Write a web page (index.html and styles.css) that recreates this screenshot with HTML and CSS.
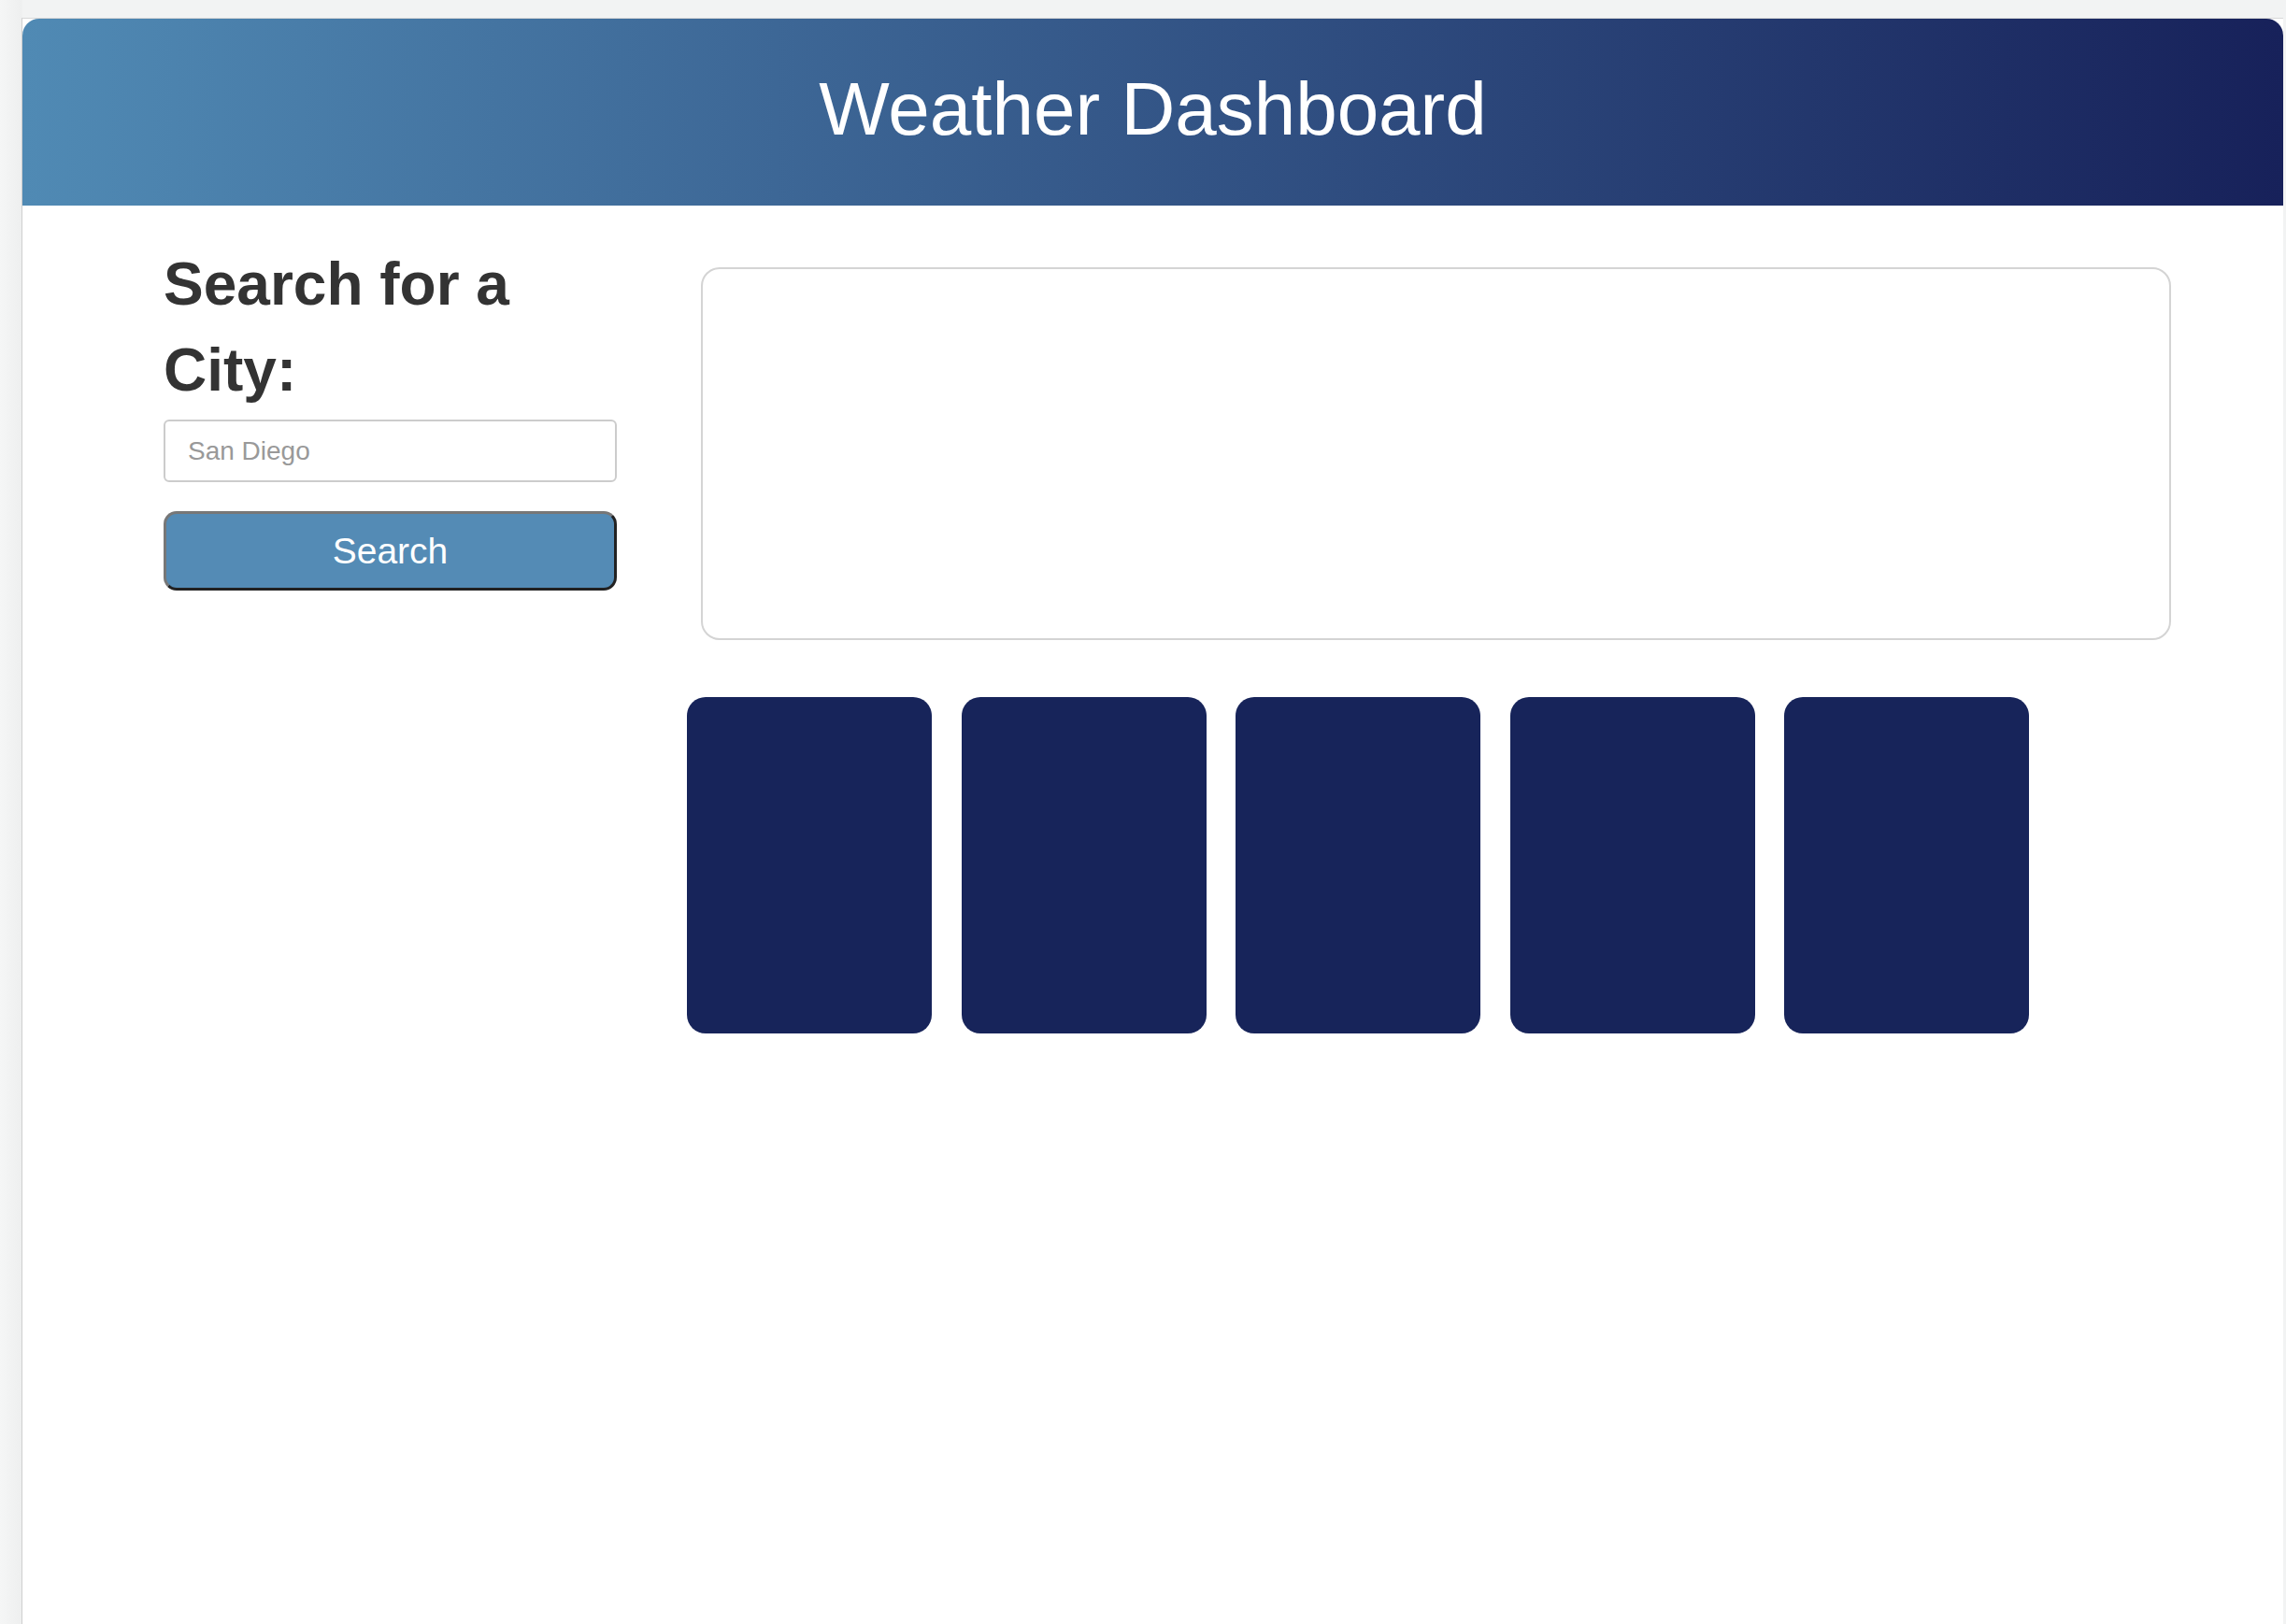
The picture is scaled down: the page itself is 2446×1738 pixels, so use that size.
FILE: index.html
```html
<!DOCTYPE html>
<html lang="en">
<head>
<meta charset="utf-8">
<title>Weather Dashboard</title>
<link rel="stylesheet" href="styles.css">
</head>
<body>
<div class="window">
  <header class="hero">
    <h1 class="hero-title">Weather Dashboard</h1>
  </header>
  <div class="content">
    <aside class="sidebar">
      <h2 class="search-title">Search for a City:</h2>
      <input class="search-input" type="text" placeholder="San Diego">
      <button class="search-btn" type="button">Search</button>
    </aside>
    <main class="main">
      <section class="today"></section>
      <div class="forecast">
        <div class="card"></div>
        <div class="card"></div>
        <div class="card"></div>
        <div class="card"></div>
        <div class="card"></div>
      </div>
    </main>
  </div>
</div>
</body>
</html>
```
FILE: styles.css
```css
html, body {
  margin: 0;
  padding: 0;
}
body {
  height: 1738px;
  overflow: hidden;
  box-sizing: border-box;
  padding: 19px 3px 0 23px;
  background: linear-gradient(to right, #f5f6f6, #eeefef 23px, #f2f3f3 24px);
  font-family: "Liberation Sans", Arial, Helvetica, sans-serif;
}
.window {
  background: #ffffff;
  border-top: 1px solid #d8d8d8;
  border-left: 1px solid #cfcfcf;
  height: 1719px;
  box-sizing: border-box;
}
.hero {
  height: 200px;
  border-radius: 18px 18px 0 0;
  background: linear-gradient(to right, #508ab4, #17215a);
  display: flex;
  align-items: center;
  justify-content: center;
}
.hero-title {
  margin: 0;
  color: #ffffff;
  font-size: 80px;
  font-weight: normal;
  line-height: 1;
  padding-bottom: 6px;
}
.content {
  display: flex;
  align-items: flex-start;
}
.sidebar {
  width: 485px;
  margin-left: 151px;
  padding-top: 38px;
  display: flex;
  flex-direction: column;
}
.search-title {
  margin: 0;
  font-size: 64px;
  line-height: 92px;
  font-weight: bold;
  color: #333333;
}
.search-input {
  margin-top: 7px;
  height: 67px;
  box-sizing: border-box;
  border: 2px solid #cccccc;
  border-radius: 6px;
  padding: 0 24px;
  font-family: "Liberation Sans", Arial, sans-serif;
  font-size: 28px;
  color: #555555;
  outline: none;
}
.search-input::placeholder {
  color: #999999;
}
.search-btn {
  margin-top: 31px;
  height: 85px;
  box-sizing: border-box;
  background: #548bb5;
  border: 3px solid;
  border-color: #777777 #222222 #222222 #777777;
  border-radius: 14px;
  color: #ffffff;
  font-family: "Liberation Sans", Arial, sans-serif;
  font-size: 39px;
  padding: 0;
}
.main {
  margin-left: 75px;
  padding-top: 66px;
  flex: 0 0 auto;
}
.today {
  margin-left: 15px;
  width: 1573px;
  height: 399px;
  box-sizing: border-box;
  border: 2px solid #d4d4d4;
  border-radius: 20px;
}
.forecast {
  margin-top: 61px;
  display: flex;
  gap: 31.5px;
}
.card {
  width: 262px;
  height: 360px;
  background: #17245a;
  border-radius: 20px;
}
```
